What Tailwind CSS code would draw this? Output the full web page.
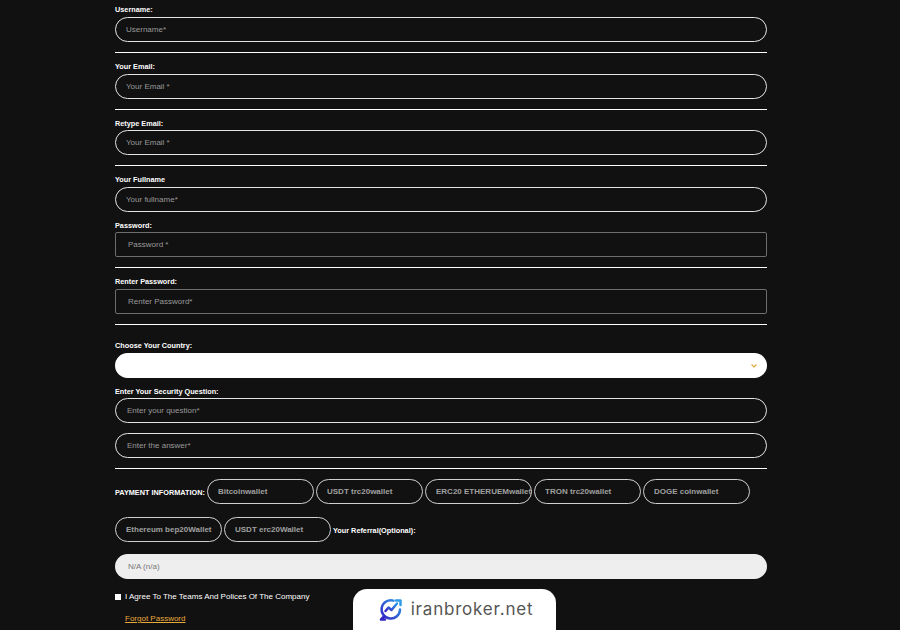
<!DOCTYPE html>
<html lang="en">

<head>
  <meta charset="UTF-8" />
  <meta name="viewport" content="width=device-width, initial-scale=1.0" />
  <script src="https://cdn.jsdelivr.net/npm/@tailwindcss/browser@4"></script>
  <title>Register</title>
</head>

<body class="relative h-[630px] overflow-hidden bg-[#111111] font-['Liberation_Sans',Arial,sans-serif]">
  <form class="ml-[115px] w-[652px] pt-[5px]">
    <label class="block h-[12px] text-[7.3px] leading-[10px] font-bold text-white">Username:</label>
    <input type="text" placeholder="Username*" class="block h-[25px] w-full rounded-[13px] border border-[#e5e5e5] bg-transparent pl-[10px] text-[8px] text-white placeholder:text-[#999999]" />
    <hr class="mt-[10px] mb-[9px] border-white" />

    <label class="block h-[12px] text-[7.3px] leading-[10px] font-bold text-white">Your Email:</label>
    <input type="text" placeholder="Your Email *" class="block h-[25px] w-full rounded-[13px] border border-[#e5e5e5] bg-transparent pl-[10px] text-[8px] text-white placeholder:text-[#999999]" />
    <hr class="mt-[10px] mb-[9px] border-white" />

    <label class="block h-[11px] text-[7.3px] leading-[10px] font-bold text-white">Retype Email:</label>
    <input type="text" placeholder="Your Email *" class="block h-[25px] w-full rounded-[13px] border border-[#e5e5e5] bg-transparent pb-[1px] pl-[10px] text-[8px] text-white placeholder:text-[#999999]" />
    <hr class="mt-[10px] mb-[9px] border-white" />

    <label class="block h-[12px] text-[7.3px] leading-[10px] font-bold text-white">Your Fullname</label>
    <input type="text" placeholder="Your fullname*" class="block h-[25px] w-full rounded-[13px] border border-[#e5e5e5] bg-transparent pl-[10px] text-[8px] text-white placeholder:text-[#999999]" />

    <label class="mt-[9px] block h-[11px] text-[7.3px] leading-[10px] font-bold text-white">Password:</label>
    <input type="password" placeholder="Password *" class="block h-[25px] w-full rounded-[2px] border border-[#6e6e6e] bg-transparent pl-[12px] text-[8px] text-white placeholder:text-[#999999]" />
    <hr class="mt-[10px] mb-[9px] border-white" />

    <label class="block h-[12px] text-[7.3px] leading-[10px] font-bold text-white">Renter Password:</label>
    <input type="password" placeholder="Renter Password*" class="block h-[25px] w-full rounded-[2px] border border-[#6e6e6e] bg-transparent pl-[12px] text-[8px] text-white placeholder:text-[#999999]" />
    <hr class="mt-[10px] mb-[16px] border-white" />

    <label class="block h-[12px] text-[7.3px] leading-[10px] font-bold text-white">Choose Your Country:</label>
    <div class="flex h-[25px] w-full items-center justify-end rounded-[13px] bg-white pr-[9px]">
      <svg width="8" height="6" viewBox="0 0 8 6" fill="none" stroke="#e3a93f" stroke-width="1.2">
        <path d="M1.5 1.5L4 4l2.5-2.5" />
      </svg>
    </div>

    <label class="mt-[9px] block h-[11px] text-[7.3px] leading-[10px] font-bold text-white">Enter Your Security Question:</label>
    <input type="text" placeholder="Enter your question*" class="block h-[25px] w-full rounded-[13px] border border-[#e5e5e5] bg-transparent pl-[11px] text-[8px] text-white placeholder:text-[#999999]" />
    <input type="text" placeholder="Enter the answer*" class="mt-[10px] block h-[25px] w-full rounded-[13px] border border-[#e5e5e5] bg-transparent pl-[11px] text-[8px] text-white placeholder:text-[#999999]" />
    <hr class="mt-[10px] mb-[10px] border-white" />

    <div class="flex flex-wrap items-center gap-x-[2px] gap-y-[13px]">
      <label class="w-[90px] pt-[2px] text-[7.3px] leading-[10px] font-bold whitespace-nowrap text-white">PAYMENT INFORMATION:</label>
      <input type="text" placeholder="Bitcoinwallet" class="h-[25px] w-[107px] rounded-[13px] border border-[#d0d0d0] bg-transparent pl-[10px] text-[8px] font-bold text-white placeholder:text-[#a0a0a0]" />
      <input type="text" placeholder="USDT trc20wallet" class="h-[25px] w-[107px] rounded-[13px] border border-[#d0d0d0] bg-transparent pl-[10px] text-[8px] font-bold text-white placeholder:text-[#a0a0a0]" />
      <input type="text" placeholder="ERC20 ETHERUEMwallet" class="h-[25px] w-[107px] rounded-[13px] border border-[#d0d0d0] bg-transparent pl-[10px] text-[8px] font-bold text-white placeholder:text-[#a0a0a0]" />
      <input type="text" placeholder="TRON trc20wallet" class="h-[25px] w-[107px] rounded-[13px] border border-[#d0d0d0] bg-transparent pl-[10px] text-[8px] font-bold text-white placeholder:text-[#a0a0a0]" />
      <input type="text" placeholder="DOGE coinwallet" class="h-[25px] w-[107px] rounded-[13px] border border-[#d0d0d0] bg-transparent pl-[10px] text-[8px] font-bold text-white placeholder:text-[#a0a0a0]" />
      <input type="text" placeholder="Ethereum bep20Wallet" class="h-[25px] w-[107px] rounded-[13px] border border-[#d0d0d0] bg-transparent pl-[10px] text-[8px] font-bold text-white placeholder:text-[#a0a0a0]" />
      <input type="text" placeholder="USDT erc20Wallet" class="h-[25px] w-[107px] rounded-[13px] border border-[#d0d0d0] bg-transparent pl-[10px] text-[8px] font-bold text-white placeholder:text-[#a0a0a0]" />
      <label class="pt-[2px] text-[7.3px] leading-[10px] font-bold text-white">Your Referral(Optional):</label>
    </div>

    <input type="text" placeholder="N/A (n/a)" class="mt-[12px] block h-[25px] w-full rounded-[13px] bg-[#eeeeee] pl-[13px] text-[8px] placeholder:text-[#777777]" />

    <div class="mt-[13px] flex items-center gap-[4px]">
      <span class="h-[6px] w-[6px] bg-white"></span>
      <span class="text-[8px] leading-[10px] text-white">I Agree To The Teams And Polices Of The Company</span>
    </div>
    <a href="#" class="mt-[12px] ml-[10px] block text-[8px] leading-[10px] text-[#e8a93c] underline">Forgot Password</a>
  </form>

  <!-- watermark badge over the page -->
  <div class="absolute top-[589px] left-[353px] flex h-[41px] w-[203px] items-start justify-center gap-[7px] rounded-t-[14px] bg-white pt-[8px]">
    <svg class="ml-[2px]" width="25" height="25" viewBox="0 0 25 25" fill="none" stroke-width="2.5" stroke-linecap="round" stroke-linejoin="round">
      <defs>
        <linearGradient id="logoGrad" x1="0" y1="1" x2="1" y2="0">
          <stop offset="0" stop-color="#3326c4" />
          <stop offset="1" stop-color="#2f9be8" />
        </linearGradient>
      </defs>
      <path d="M15.5 3.6A9.2 9.2 0 1 0 22 12.5" stroke="url(#logoGrad)" />
      <path d="M7.5 14l3-3.5 3 2.5 5.5-6.5" stroke="url(#logoGrad)" />
      <path d="M18 3.5h4.5V8" stroke="#2f9be8" />
      <path d="M6 19.5l-3 3h4" stroke="#3326c4" />
    </svg>
    <span class="ml-[1px] font-['Inter',sans-serif] text-[17px] leading-[24px] tracking-[0.8px] text-[#555555]">iranbroker.net</span>
  </div>
</body>

</html>
